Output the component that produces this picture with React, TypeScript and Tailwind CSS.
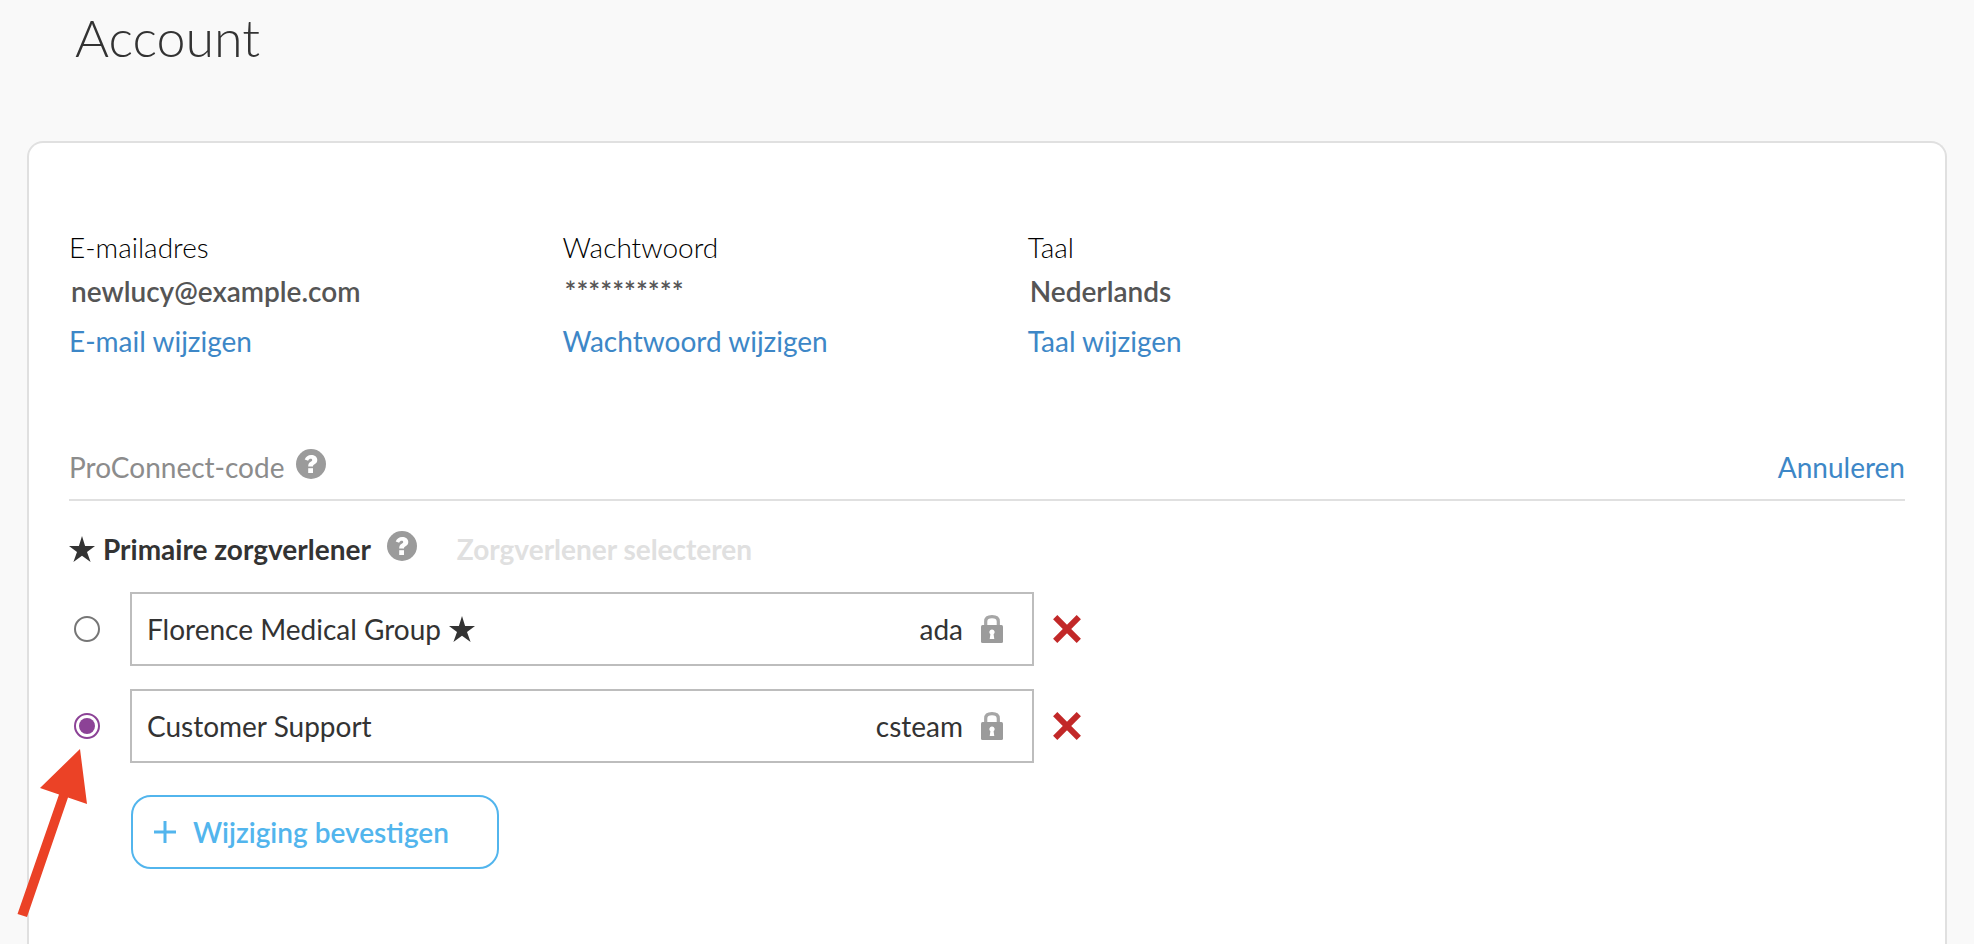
import { useState } from 'react';

const accountFields = [
  { label: 'E-mailadres', value: 'newlucy@example.com', action: 'E-mail wijzigen' },
  { label: 'Wachtwoord', value: '**********', action: 'Wachtwoord wijzigen' },
  { label: 'Taal', value: 'Nederlands', action: 'Taal wijzigen' },
];

const providers = [
  { id: 'ada', name: 'Florence Medical Group', code: 'ada', primary: true },
  { id: 'csteam', name: 'Customer Support', code: 'csteam', primary: false },
];

function StarIcon() {
  return (
    <svg viewBox="0 0 26 26" className="size-[26px] shrink-0" fill="currentColor" aria-hidden="true">
      <path d="M13 0l3.1 9.9H26l-8 6 3.6 10.1L13 19.8 4.4 26 8 15.900l-8-6h9.9z" />
    </svg>
  );
}

function HelpButton({ label }: { label: string }) {
  return (
    <button type="button" aria-label={label} className="size-[30px] shrink-0 text-[#9b9b9b]">
      <svg viewBox="0 0 30 30" className="size-full" aria-hidden="true">
        <circle cx="15" cy="15" r="15" fill="currentColor" />
        <path
          d="M8.7 10.6C10 7.6 12 6 15.1 6c3.5 0 6.2 2 6.2 4.9 0 2.3-1.3 3.4-2.7 4.4-1.2.8-1.6 1.1-1.6 2.2h-4.8c0-2.6.8-3.6 2.5-4.7 1.1-.7 1.5-1.1 1.5-1.8 0-.8-.6-1.2-1.5-1.2-1.1 0-1.8.6-2.6 2z"
          fill="#fff"
        />
        <path d="M12.2 19.2H17V24h-4.8z" fill="#fff" />
      </svg>
    </button>
  );
}

function LockIcon() {
  return (
    <svg viewBox="0 0 22 28" className="h-7 w-[22px] shrink-0" aria-hidden="true">
      <path d="M4.7 12V6.5C4.7 3.5 7 1.7 11 1.7s6.300 1.800 6.300 4.800V12" fill="none" stroke="#a6a6a6" strokeWidth="3.2" />
      <rect y="10" width="22" height="18" rx="1.5" fill="#9b9b9b" />
      <path d="M11 14.5a2.600 2.600 0 0 1 1.600 4.700l.7 4.800H8.700l.7-4.800A2.600 2.600 0 0 1 11 14.500z" fill="#fff" />
    </svg>
  );
}

export default function App() {
  const [selected, setSelected] = useState('csteam');

  return (
    <div className="relative flex min-h-screen flex-col bg-[#f9f9f9] px-[27px] font-['Lato',sans-serif] text-[28px] leading-[44px] text-[#333]">
      <h1 className="px-12 pt-[5px] pb-[72px] text-[52px] leading-[64px] font-light">Account</h1>

      <main className="flex-1 rounded-t-2xl border-2 border-b-0 border-[#e0e0e0] bg-white px-10 pt-[82px] pb-[73px]">
        <div className="flex flex-wrap gap-x-[200px]">
          {accountFields.map((field) => (
            <div key={field.label}>
              <div className="font-light text-black">{field.label}</div>
              <div className="px-0.5 font-semibold text-[#555]">{field.value}</div>
              <a href="#" className="mt-1.5 block text-[#3d87c7]">
                {field.action}
              </a>
            </div>
          ))}
        </div>

        <section>
          <div className="mt-[82px] flex items-center justify-between border-b-2 border-[#e0e0e0] pb-2.5">
            <div className="flex gap-3">
              <h2 className="text-[#8c8c8c]">ProConnect-code</h2>
              <div className="flex pt-1">
                <HelpButton label="Uitleg ProConnect-code" />
              </div>
            </div>
            <button type="button" className="text-[#3d87c7]">
              Annuleren
            </button>
          </div>

          <div className="mt-[26px] flex font-bold">
            <div className="flex items-center gap-2">
              <StarIcon />
              <h3>Primaire zorgverlener</h3>
            </div>
            <div className="ml-4 flex pt-1">
              <HelpButton label="Uitleg primaire zorgverlener" />
            </div>
            <button type="button" disabled className="ml-10 text-[#e0e0e0]">
              Zorgverlener selecteren
            </button>
          </div>

          <div className="mt-[21px] flex flex-col gap-[23px]">
            {providers.map((provider) => (
              <div key={provider.id} className="flex items-center">
                <input
                  type="radio"
                  id={provider.id}
                  name="provider"
                  checked={selected === provider.id}
                  onChange={() => setSelected(provider.id)}
                  className="mx-[5px] size-[26px] shrink-0 appearance-none rounded-full border-2 border-[#767676] bg-white bg-clip-content p-[3px] checked:border-[#8c4296] checked:bg-[#8c4296]"
                />
                <label
                  htmlFor={provider.id}
                  className="ml-[25px] flex w-[904px] items-center justify-between border-2 border-[#bdbdbd] py-[13px] pr-[29px] pl-[15px]"
                >
                  <span className="flex items-center gap-2">
                    {provider.name}
                    {provider.primary && <StarIcon />}
                  </span>
                  <span className="flex items-center gap-[18px]">
                    {provider.code}
                    <LockIcon />
                  </span>
                </label>
                <button type="button" aria-label={`${provider.name} verwijderen`} className="ml-[19px] text-[#c22828]">
                  <svg viewBox="0 0 28 28" className="size-7" fill="none" stroke="currentColor" strokeWidth="6" aria-hidden="true">
                    <path d="M2.2 2.2l23.6 23.6M25.8 2.2L2.2 25.8" />
                  </svg>
                </button>
              </div>
            ))}
          </div>

          <button
            type="button"
            className="mt-8 ml-[62px] flex items-center gap-[17px] rounded-[20px] border-2 border-[#52b5ed] py-[13px] pr-12 pl-[21px] font-semibold text-[#52b5ed]"
          >
            <svg viewBox="0 0 22 22" className="size-[22px]" stroke="currentColor" strokeWidth="3" aria-hidden="true">
              <path d="M11 0v22M0 11h22" />
            </svg>
            Wijziging bevestigen
          </button>
        </section>
      </main>

      {/* pointer towards the selected provider */}
      <svg viewBox="0 0 70 168" className="pointer-events-none absolute top-[749px] left-[17px] h-[168px] w-[70px]" fill="#eb4226" aria-hidden="true">
        <path d="M63 0l7 55-19-6.500L10 168l-9.500-3L42 45.500 23 39z" />
      </svg>
    </div>
  );
}
